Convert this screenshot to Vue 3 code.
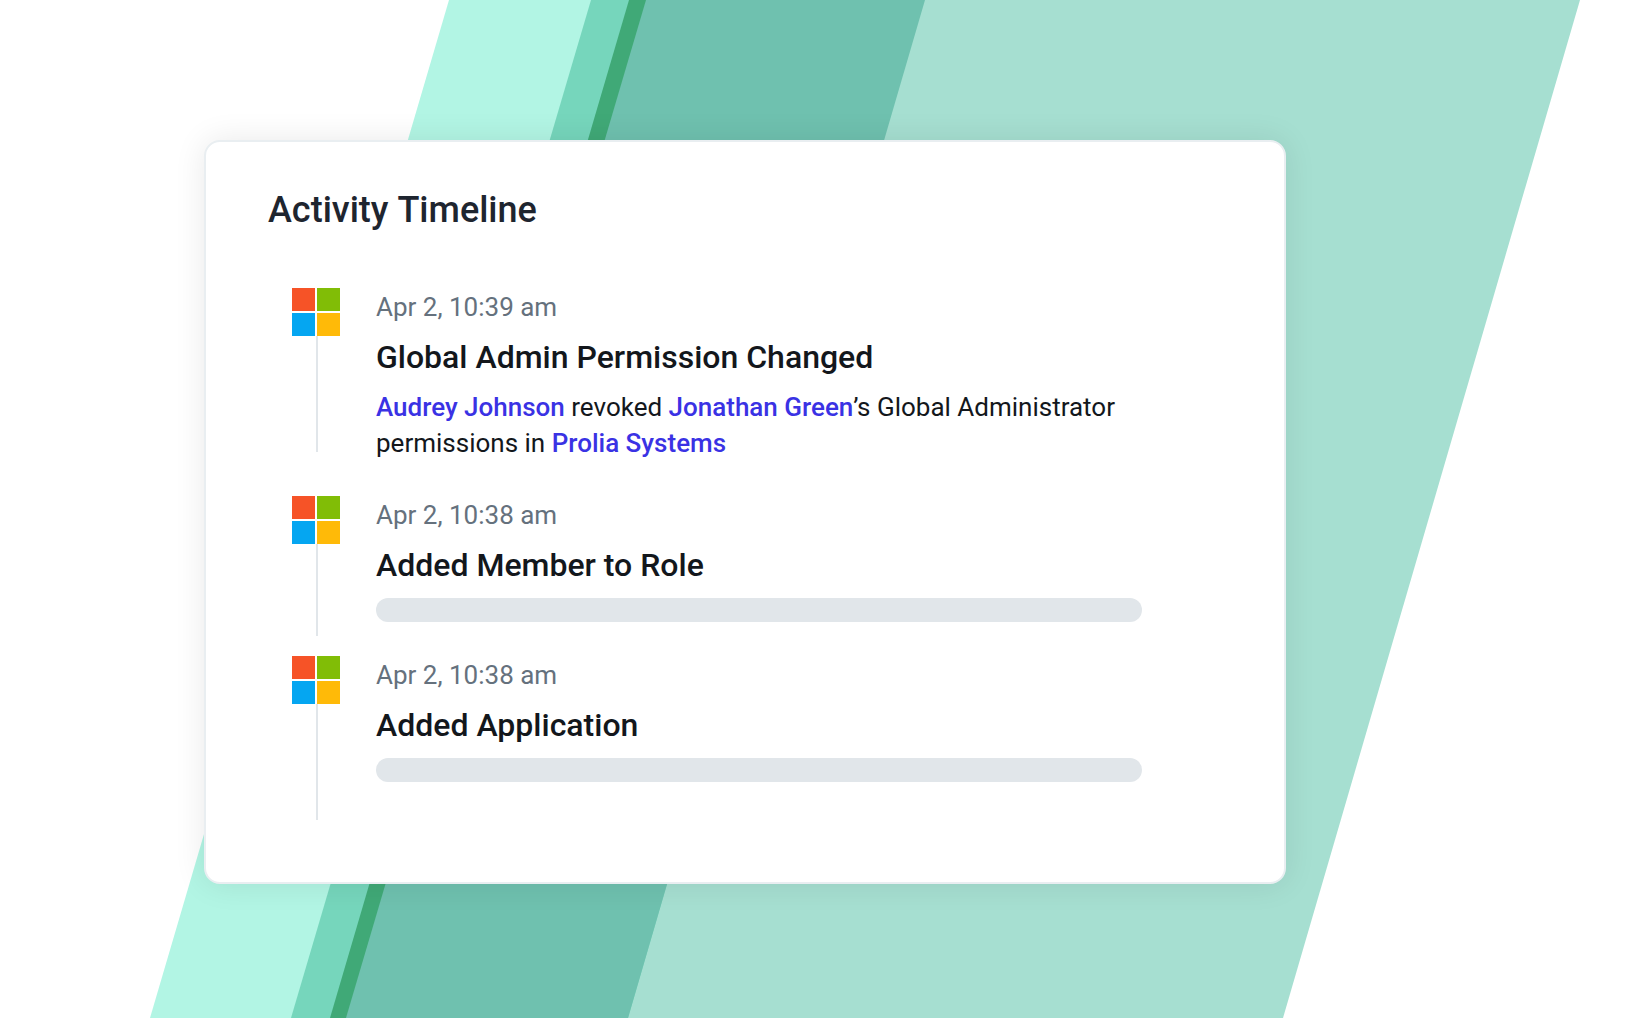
<script setup>
const events = [
  {
    id: 1,
    time: 'Apr 2, 10:39 am',
    title: 'Global Admin Permission Changed',
    detail: [
      { text: 'Audrey Johnson', link: true },
      { text: ' revoked ' },
      { text: 'Jonathan Green', link: true },
      { text: '’s Global Administrator permissions in ' },
      { text: 'Prolia Systems', link: true },
    ],
  },
  { id: 2, time: 'Apr 2, 10:38 am', title: 'Added Member to Role', shortLine: true },
  { id: 3, time: 'Apr 2, 10:38 am', title: 'Added Application' },
]
</script>

<template>
  <main class="page">
    <svg class="stripes" viewBox="0 0 1626 1018" preserveAspectRatio="none" aria-hidden="true">
      <polygon points="449,0 1000,0 700,1018 150,1018" fill="#b2f5e4" />
      <polygon points="591,0 1000,0 700,1018 291,1018" fill="#76d6bc" />
      <polygon points="629,0 900,0 600,1018 330,1018" fill="#40a977" />
      <polygon points="924,0 1580,0 1283,1018 628,1018" fill="#a6dfd1" />
      <polygon points="646,0 925,0 628,1018 346,1018" fill="#6fc1af" />
    </svg>

    <section class="card" aria-labelledby="timeline-title">
      <h1 id="timeline-title" class="card-title">Activity Timeline</h1>
      <ol class="timeline">
        <li v-for="event in events" :key="event.id" class="event">
          <div class="rail">
            <svg class="logo" viewBox="0 0 48 48" role="img" aria-label="Microsoft">
              <rect width="23" height="23" fill="#f65327" />
              <rect x="25" width="23" height="23" fill="#81bd06" />
              <rect y="25" width="23" height="23" fill="#05a6f1" />
              <rect x="25" y="25" width="23" height="23" fill="#ffba08" />
            </svg>
            <span class="line" :class="{ short: event.shortLine }"></span>
          </div>
          <div class="content">
            <time class="time">{{ event.time }}</time>
            <h2 class="title">{{ event.title }}</h2>
            <p v-if="event.detail" class="detail"><template v-for="(part, i) in event.detail" :key="i"><a v-if="part.link" href="#" class="link">{{ part.text }}</a><template v-else>{{ part.text }}</template></template></p>
            <div v-else class="placeholder"></div>
          </div>
        </li>
      </ol>
    </section>
  </main>
</template>

<style>
body {
  margin: 0;
  background: #fff;
}
</style>

<style scoped>
.page {
  position: relative;
  box-sizing: border-box;
  min-height: 100vh;
  padding: 140px 340px 134px 204px;
  font-family: Roboto, "Liberation Sans", sans-serif;
  color: #13171c;
}

.stripes {
  position: absolute;
  inset: 0;
  width: 100%;
  height: 100%;
}

.card {
  position: relative;
  padding: 44px 62px 62px;
  border: 2px solid #e9eef1;
  border-radius: 16px;
  background: #fff;
  box-shadow: 0 0 32px rgba(0, 0, 0, 0.09);
}

.card-title {
  margin: 0 0 54px;
  font-size: 36px;
  line-height: 48px;
  font-weight: 500;
  font-kerning: none;
  color: #1e252f;
}

.timeline {
  margin: 0;
  padding: 0 80px 0 24px;
  list-style: none;
}

.event {
  display: flex;
  align-items: flex-start;
  gap: 36px;
}

.rail {
  display: flex;
  flex: none;
  flex-direction: column;
  width: 48px;
}

.logo {
  display: block;
  width: 48px;
  height: 48px;
}

.line {
  width: 2px;
  height: 116px;
  margin-left: 24px;
  background: #e1e6ea;
}

.line.short {
  height: 92px;
}

.content {
  flex: 1;
  min-width: 0;
  padding-bottom: 34px;
}

.time {
  display: block;
  font-size: 26px;
  line-height: 38px;
  color: #65717d;
}

.title {
  margin: 8px 0 0;
  font-size: 32px;
  line-height: 46px;
  font-weight: 500;
}

.detail {
  margin: 9px 0 1px;
  font-size: 26px;
  line-height: 36px;
}

.link {
  font-weight: 500;
  color: #3a32e4;
  text-decoration: none;
}

.placeholder {
  height: 24px;
  margin-top: 10px;
  border-radius: 12px;
  background: #e1e6ea;
}
</style>
